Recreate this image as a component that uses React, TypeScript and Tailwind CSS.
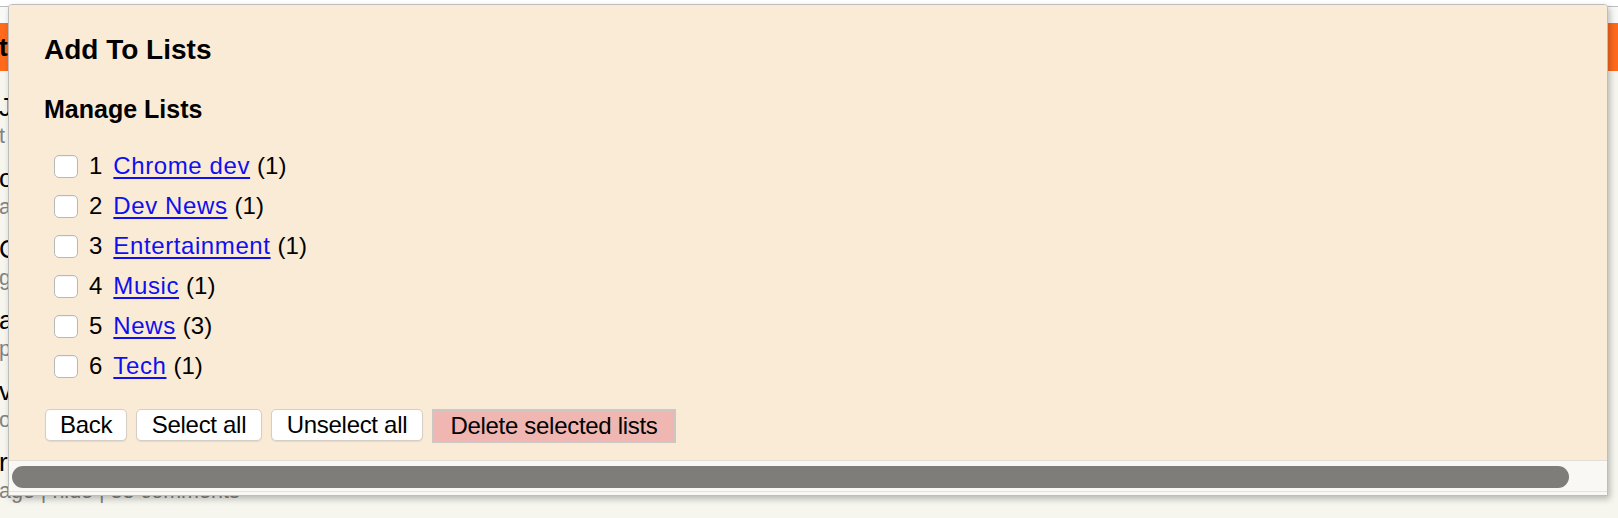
import React from "react";

const lists = [
  { n: 1, name: "Chrome dev", count: 1 },
  { n: 2, name: "Dev News", count: 1 },
  { n: 3, name: "Entertainment", count: 1 },
  { n: 4, name: "Music", count: 1 },
  { n: 5, name: "News", count: 3 },
  { n: 6, name: "Tech", count: 1 },
];

const bgItems = [
  { t: "Jupyter notebooks in the browser", s: "t 212 points by someone 3 hours ago | hide | 41 comments" },
  { t: "or how I learned to stop worrying", s: "ago | hide | 12 comments" },
  { t: "Compilers for the rest of us", s: "g 98 points by user 5 hours ago | hide" },
  { t: "a new approach to distributed systems", s: " points by dev 6 hours ago | hide | 7 comments" },
  { t: "visualizing data with plain CSS", s: "o 54 points by author 7 hours ago | hide" },
  { t: "rethinking the modern web stack", s: "age | hide | 33 comments" },
];

export default function App() {
  return (
    <div
      className="relative w-[1618px] h-[518px] overflow-hidden bg-[#f6f6ef]"
      style={{ fontFamily: '"Liberation Sans", Arial, sans-serif' }}
    >
      {/* Background page */}
      <div className="h-[7px] bg-white border-b border-[#bdbdbd]" />
      <div className="h-[16px] bg-[#f9f9f7]" />
      <div className="h-[48px] bg-[#ff6a1c] flex items-center">
        <span className="-ml-[1px] text-[26px] font-bold text-black whitespace-nowrap">
          t Hacker News new | past | comments | ask | show | jobs | submit
        </span>
      </div>
      <div className="pt-[21px] -ml-[1px]">
        {bgItems.map((it, i) => (
          <div key={i}>
            <div className="h-[30px] leading-[30px] text-[26px] text-black whitespace-nowrap">
              {it.t}
            </div>
            <div className="h-[41px] leading-[28px] text-[21.5px] text-[#828282] whitespace-nowrap">
              {it.s}
            </div>
          </div>
        ))}
      </div>

      {/* Popup */}
      <div className="absolute left-[8px] top-[4px] w-[1600px] h-[492px] flex flex-col border border-[#bdbdbd] rounded-t-[4px] shadow-[2px_3px_6px_rgba(0,0,0,0.25)] overflow-hidden bg-white">
        <div className="flex-1 bg-[#faebd7] pl-[35px] pt-[29px]">
          <div className="text-[28px] leading-[32px] font-bold text-black">Add To Lists</div>
          <div className="mt-[29px] text-[25px] leading-[29px] font-bold text-black">
            Manage Lists
          </div>
          <div className="mt-[22px] flex flex-col">
            {lists.map((l) => (
              <div key={l.n} className="h-[40px] flex items-center text-[24px] text-black">
                <input
                  type="checkbox"
                  className="appearance-none ml-[10px] w-[24px] h-[23px] rounded-[5px] border border-[#b8b8b8] bg-white shadow-[inset_0_1px_1px_rgba(0,0,0,0.05)]"
                />
                <span className="ml-[11px] leading-[40px]">{l.n}</span>
                <a
                  href="#"
                  className="ml-[11px] leading-[40px] text-[#1010ee] underline decoration-[1.5px] underline-offset-[3px] tracking-[0.6px]"
                >
                  {l.name}
                </a>
                <span className="ml-[7px] leading-[40px]">({l.count})</span>
              </div>
            ))}
          </div>
          <div className="mt-[23px] ml-[1px] flex items-start gap-[9px] text-[24px] leading-[28px] tracking-[-0.3px] text-black">
            <button className="w-[82px] h-[32px] bg-white border border-[#d5cec6] rounded-[5px] shadow-[0_1px_1px_rgba(0,0,0,0.08)]">
              Back
            </button>
            <button className="w-[126px] h-[32px] bg-white border border-[#d5cec6] rounded-[5px] shadow-[0_1px_1px_rgba(0,0,0,0.08)]">
              Select all
            </button>
            <button className="w-[152px] h-[32px] bg-white border border-[#d5cec6] rounded-[5px] shadow-[0_1px_1px_rgba(0,0,0,0.08)]">
              Unselect all
            </button>
            <button className="w-[244px] h-[34px] bg-[#efb6b2] border-2 border-[#cbc7c2]">
              Delete selected lists
            </button>
          </div>
        </div>
        <div className="h-[35px] shrink-0 bg-[#faf8f4] border-t border-[#e2ddd6] flex flex-col">
          <div className="mt-[5px] ml-[3px] w-[1557px] h-[22px] rounded-full bg-[#7e7d79]" />
          <div className="mt-[3px] border-t border-[#e6e3de]" />
        </div>
      </div>
    </div>
  );
}
